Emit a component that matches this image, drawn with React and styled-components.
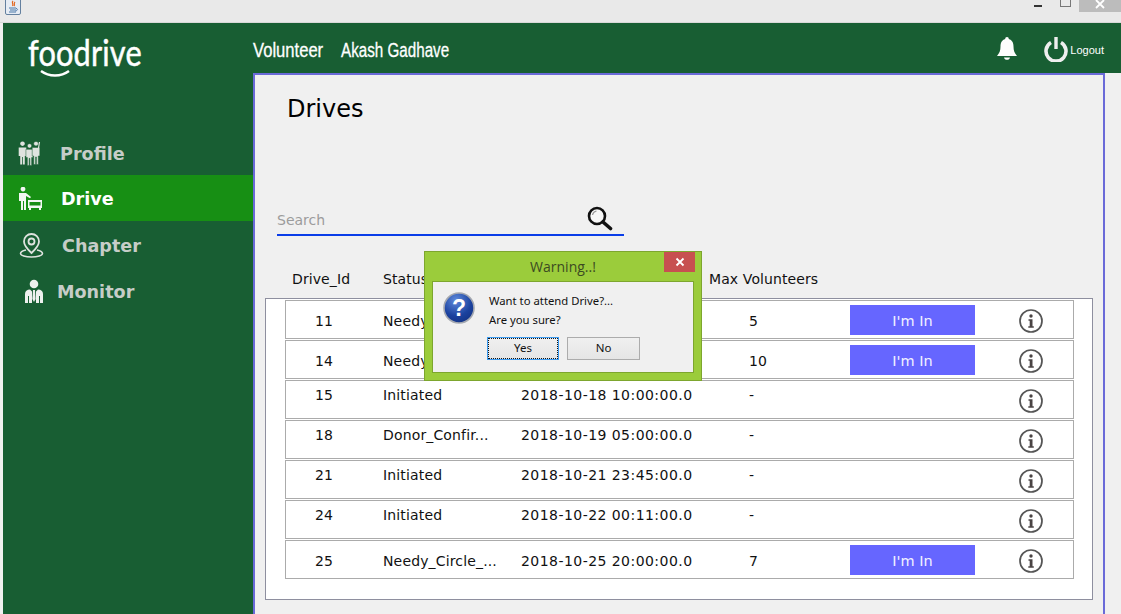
import React from 'react';
import styled, { createGlobalStyle } from 'styled-components';

const GlobalStyle = createGlobalStyle`
  html, body {
    margin: 0;
    padding: 0;
    height: 100%;
    overflow: hidden;
    background: #f0f0f0;
    font-family: "DejaVu Sans", sans-serif;
  }
`;

const green = '#185e33';

const Page = styled.div`
  position: relative;
  width: 1121px;
  height: 614px;
  overflow: hidden;
  display: flex;
  flex-direction: column;
  background: #f0f0f0;
`;

const TitleBar = styled.div`
  height: 23px;
  flex: none;
  display: flex;
  align-items: flex-start;
  padding-left: 5px;
  background: #e9e9e9;
  box-sizing: border-box;
  border-bottom: 1px solid #d8d8d8;
`;

const WindowControls = styled.div`
  margin-left: auto;
  display: flex;
  align-items: flex-start;
`;

const MinButton = styled.div`
  width: 8px;
  height: 2px;
  margin: 5px 18px 0 0;
  background: #333;
`;

const MaxButton = styled.div`
  width: 9px;
  height: 6px;
  margin-right: 8px;
  border: 1px solid #777;
  border-top: none;
`;

const CloseButton = styled.div`
  width: 42px;
  height: 12px;
  background: #bcbcbc;
  display: flex;
  justify-content: center;
`;

const Frame = styled.div`
  flex: 1;
  min-height: 0;
  display: flex;
  flex-direction: column;
  margin-left: 3px;
`;

const Header = styled.header`
  height: 50px;
  flex: none;
  display: flex;
  align-items: center;
  background: ${green};
  color: #fff;
`;

const Logo = styled.div`
  position: relative;
  z-index: 1;
  width: 250px;
  flex: none;
  box-sizing: border-box;
  padding: 11px 0 0 25px;
  align-self: flex-start;
  display: flex;
  flex-direction: column;
  height: 100%;
`;

const LogoText = styled.div`
  font-family: "Lato", sans-serif;
  font-size: 37px;
  line-height: 36px;
  letter-spacing: 0.2px;
  color: #fff;
  transform: scaleX(0.83);
  transform-origin: left center;
  -webkit-text-stroke: 0.5px #fff;
`;

const Smile = styled.svg`
  display: block;
  flex: none;
  margin: 0 0 0 12px;
`;

const UserLabel = styled.span`
  display: inline-block;
  width: ${p => p.$w}px;
  flex: none;
  font-family: "Liberation Sans", sans-serif;
  font-size: 20px;
  white-space: nowrap;
  margin-top: 5px;
  transform: scaleX(${p => p.$scale});
  transform-origin: left center;
  -webkit-text-stroke: 0.3px #fff;
`;

const HeaderRight = styled.div`
  margin-left: auto;
  display: flex;
  align-items: center;
  padding: 2px 17px 0 0;
`;

const LogoutLabel = styled.span`
  font-family: "Liberation Sans", sans-serif;
  font-size: 11px;
  margin: 2px 0 0 2px;
`;

const Body = styled.div`
  flex: 1;
  min-height: 0;
  display: flex;
`;

const Sidebar = styled.nav`
  width: 250px;
  flex: none;
  box-sizing: border-box;
  padding-top: 56px;
  background: ${green};
`;

const NavItem = styled.div`
  height: 46px;
  display: flex;
  align-items: center;
  box-sizing: border-box;
  padding-left: ${p => p.$indent}px;
  padding-top: ${p => (p.$active ? 1 : 3)}px;
  background: ${p => (p.$active ? '#178f14' : 'transparent')};
  color: ${p => (p.$active ? '#ffffff' : '#c6cdc8')};
  font-size: 17.6px;
  font-weight: bold;
`;

const NavIcon = styled.svg`
  flex: none;
  margin-right: ${p => p.$gap}px;
`;

const Main = styled.main`
  width: 852px;
  flex: none;
  box-sizing: border-box;
  border: 2px solid #6a6ad8;
  border-bottom: none;
  padding: 0 10px;
  background: #f0f0f0;
`;

const Title = styled.h1`
  margin: 19px 0 0 22px;
  font-size: 24px;
  line-height: 30px;
  font-weight: normal;
  color: #000;
`;

const SearchBar = styled.div`
  margin: 82px 0 0 12px;
  width: 347px;
  height: 30px;
  box-sizing: border-box;
  display: flex;
  align-items: center;
  border-bottom: 2px solid #0a3de8;
`;

const SearchInput = styled.input`
  flex: 1;
  min-width: 0;
  border: none;
  outline: none;
  background: transparent;
  padding: 0;
  font-family: "DejaVu Sans", sans-serif;
  font-size: 14px;
  &::placeholder {
    color: #9c9c9c;
    opacity: 1;
  }
`;

const SearchIcon = styled.svg`
  flex: none;
  margin: -2px 11px 0 0;
`;

const HeadRow = styled.div`
  display: flex;
  height: 20px;
  margin: 33px 0 0 27px;
  font-size: 14px;
  letter-spacing: 0.1px;
  line-height: 20px;
  color: #111;
`;

const HeadCell = styled.span`
  width: ${p => p.$w}px;
  flex: none;
`;

const TableBox = styled.div`
  margin-top: 9px;
  height: 302px;
  box-sizing: border-box;
  border: 1px solid #8e8f9f;
  background: #fff;
  padding: 1px 18px 0 19px;
`;

const Row = styled.div`
  height: 39px;
  margin-bottom: 1px;
  box-sizing: border-box;
  display: grid;
  grid-template-columns: 97px 138px 228px 101px 125px 1fr;
  align-items: center;
  border: 1px solid #ababab;
  font-size: 14px;
  color: #111;
`;

const Cell = styled.div`
  white-space: nowrap;
  overflow: hidden;
  padding-top: ${p => (p.$high ? 0 : 3)}px;
  padding-bottom: ${p => (p.$high ? 10 : 0)}px;
`;

const IdCell = styled(Cell)`
  text-align: center;
  padding-right: 21px;
`;

const StatusCell = styled(Cell)`
  letter-spacing: 0.15px;
`;

const DateCell = styled(Cell)`
  letter-spacing: 0.45px;
`;

const ImIn = styled.button`
  display: block;
  height: 30px;
  width: 125px;
  border: none;
  padding: 2px 0 0;
  background: #6666ff;
  color: #f2f2ff;
  font-family: "DejaVu Sans", sans-serif;
  font-size: 14.5px;
`;

const InfoCell = styled.div`
  display: flex;
  justify-content: center;
  padding-left: 13px;
  padding-top: 3px;
`;

const Dialog = styled.div`
  position: absolute;
  left: 424px;
  top: 251px;
  width: 278px;
  height: 130px;
  box-sizing: border-box;
  border: 1px solid #7da62e;
  background: #9bcc3b;
  padding: 0 7px 7px;
  display: flex;
  flex-direction: column;
`;

const DialogHead = styled.div`
  height: 29px;
  flex: none;
  display: flex;
  align-items: center;
  justify-content: center;
  font-family: "Open Sans", sans-serif;
  font-size: 14px;
  color: #3c4a22;
`;

const DialogClose = styled.div`
  position: absolute;
  top: 0;
  right: 6px;
  width: 31px;
  height: 20px;
  background: #c75050;
  display: flex;
  align-items: center;
  justify-content: center;
`;

const DialogBody = styled.div`
  flex: 1;
  background: #f0f0f0;
  border: 1px solid #7da62e;
  box-sizing: border-box;
  padding: 10px 0 0 10px;
  display: flex;
  flex-direction: column;
`;

const Message = styled.div`
  display: flex;
`;

const MessageText = styled.div`
  margin: -1px 0 0 14px;
  font-family: "Noto Sans", sans-serif;
  font-size: 11.3px;
  line-height: 19px;
  color: #111;
`;

const DialogButtons = styled.div`
  display: flex;
  gap: 8px;
  margin: 8px 0 0 44px;
`;

const DialogButton = styled.button`
  width: ${p => p.$w}px;
  height: 23px;
  box-sizing: border-box;
  padding: 0 0 2px;
  font-family: "Noto Sans", sans-serif;
  font-size: 11.5px;
  color: #111;
  background: linear-gradient(#f0f0f0, #e5e5e5);
  border: 1px solid ${p => (p.$focus ? '#3c9bf0' : '#acacac')};
  outline: ${p => (p.$focus ? '1px dotted #111' : 'none')};
  outline-offset: -2px;
`;

const JavaIcon = () => (
  <svg width="16" height="15" viewBox="0 0 16 15">
    <rect x="0.5" y="-2" width="15" height="16.5" rx="1.5" fill="#e6ecf4" stroke="#64809f" />
    <path d="M8 1c-2 2 1 3-.5 5M10 2c-2 2 .5 2.500-1 4" fill="none" stroke="#e2661e" strokeWidth="1.200" />
    <path d="M4 8h7M5 10h6M4 12h7" stroke="#4b78a8" strokeWidth="1" />
    <path d="M11 8.500c2 0 2 2-.5 2.500" fill="none" stroke="#4b78a8" />
  </svg>
);

const BellIcon = () => (
  <svg width="22" height="26" viewBox="0 0 22 26" style={{ marginRight: 26 }}>
    <path d="M11 1c1.200 0 1.800.8 1.800 2 3.400 1 4.700 4 4.700 7.500 0 4 1 6.500 3.500 9.500H1c2.500-3 3.500-5.500 3.500-9.500C4.500 7 5.800 4 9.200 3 9.200 1.800 9.800 1 11 1z" fill="#fdfdfd" />
    <path d="M8 21.500h6c-.3 1.500-1.500 2.300-3 2.300s-2.700-.8-3-2.300z" fill="#fdfdfd" />
  </svg>
);

const PowerIcon = () => (
  <svg width="24" height="26" viewBox="0 0 24 26">
    <path d="M7 6.500a10 10 0 1 0 10 0" fill="none" stroke="#efefef" strokeWidth="3.600" />
    <path d="M12 1v12" stroke="#efefef" strokeWidth="3.400" />
  </svg>
);

const person = (x, y, s = 1) =>
  `M${x} ${y}a${2.4 * s} ${2.4 * s} 0 1 1 .01 0zM${x - 4 * s} ${y + 1.5 * s}h${8 * s}v${9 * s}h-${1.6 * s}v${9 * s}h-${2 * s}v-${8 * s}h-${.8 * s}v${8 * s}h-${2 * s}v-${9 * s}h-${1.6 * s}z`;

const ProfileIcon = ({ color }) => (
  <NavIcon $gap={19} width="23" height="25" viewBox="0 0 23 25">
    <path d={person(4.5, 5, 0.95)} fill={color} />
    <path d={person(11.5, 7, 0.9)} fill={color} stroke={green} strokeWidth="0.5" />
    <path d={person(18, 5, 0.95)} fill={color} stroke={green} strokeWidth="0.5" />
    <path d="M20.500 7l1-6" stroke={color} strokeWidth="1.200" />
  </NavIcon>
);

const DriveIcon = ({ color }) => (
  <NavIcon $gap={18} width="25" height="24" viewBox="0 0 25 24">
    <path d="M5 4.500a2.400 2.400 0 1 1 .01 0zM1 6h7l5 4-1 1.200L8 9v14H6v-9H5v9H3v-9H1z" fill={color} />
    <path d="M10 13h14v8h-14zM11.500 15v3.500h11V15z" fill={color} fillRule="evenodd" />
    <path d="M11 21h2v2h-2zM21 21h2v2h-2z" fill={color} />
  </NavIcon>
);

const ChapterIcon = ({ color }) => (
  <NavIcon $gap={18} width="25" height="25" viewBox="0 0 25 25">
    <path d="M12.500 1a7.500 7.500 0 0 0-7.500 7.500c0 4.500 7.500 11.500 7.500 11.500s7.500-7 7.500-11.500A7.500 7.500 0 0 0 12.500 1z" fill="none" stroke={color} strokeWidth="1.800" />
    <circle cx="12.500" cy="8.500" r="3" fill="none" stroke={color} strokeWidth="1.800" />
    <path d="M7 17c-3 .7-5.500 2-5.500 3.500 0 2 5 3.500 11 3.500s11-1.500 11-3.500c0-1.500-2.500-2.800-5.500-3.500" fill="none" stroke={color} strokeWidth="1.600" />
  </NavIcon>
);

const MonitorIcon = ({ color }) => (
  <NavIcon $gap={13} width="20" height="25" viewBox="0 0 20 25">
    <circle cx="10" cy="5" r="4.300" fill={color} />
    <path d="M1 24v-9c0-3 2-4.500 5-4.500l2 2v11.500H5v-7H4v7zM19 24v-9c0-3-2-4.500-5-4.500l-2 2v11.500h3v-7h1v7z" fill={color} />
    <path d="M9 11h2l.6 9-1.600 3-1.600-3z" fill={color} />
  </NavIcon>
);

const MagnifierIcon = () => (
  <SearchIcon width="26" height="26" viewBox="0 0 26 26">
    <circle cx="10" cy="10" r="8" fill="#f7f7f7" stroke="#111" strokeWidth="2.600" />
    <path d="M5.500 9a5 5 0 0 1 4-4" fill="none" stroke="#999" strokeWidth="1.200" />
    <path d="M16 16l7.500 6.500" stroke="#111" strokeWidth="3.600" strokeLinecap="round" />
  </SearchIcon>
);

const InfoIcon = () => (
  <svg width="24" height="24" viewBox="0 0 24 24">
    <circle cx="12" cy="12" r="11" fill="#fff" stroke="#555" strokeWidth="1.700" />
    <circle cx="12" cy="7" r="1.700" fill="#4a4444" />
    <path d="M9.500 10.200h4v7h1.300v1.500H9.300v-1.500h1.400v-5.500H9.500z" fill="#4a4444" />
  </svg>
);

const QuestionIcon = () => (
  <svg width="32" height="32" viewBox="0 0 32 32" style={{ flex: 'none' }}>
    <defs>
      <radialGradient id="q" cx="0.4" cy="0.25" r="0.85">
        <stop offset="0" stopColor="#5f8bdc" />
        <stop offset="0.6" stopColor="#1b429f" />
        <stop offset="1" stopColor="#12307f" />
      </radialGradient>
    </defs>
    <circle cx="16" cy="16" r="15" fill="url(#q)" stroke="#a4a8b0" strokeWidth="1.600" />
    <text x="16" y="24" textAnchor="middle" fontFamily="Liberation Sans" fontWeight="bold" fontSize="23" fill="#fff">?</text>
  </svg>
);

const drives = [
  { id: 11, status: 'Needy_Circle_...', date: '2018-10-15 10:00:00.0', max: '5', open: true },
  { id: 14, status: 'Needy_Circle_...', date: '2018-10-17 10:00:00.0', max: '10', open: true },
  { id: 15, status: 'Initiated', date: '2018-10-18 10:00:00.0', max: '-' },
  { id: 18, status: 'Donor_Confir...', date: '2018-10-19 05:00:00.0', max: '-' },
  { id: 21, status: 'Initiated', date: '2018-10-21 23:45:00.0', max: '-' },
  { id: 24, status: 'Initiated', date: '2018-10-22 00:11:00.0', max: '-' },
  { id: 25, status: 'Needy_Circle_...', date: '2018-10-25 20:00:00.0', max: '7', open: true },
];

const App = () => (
  <Page>
    <GlobalStyle />
    <TitleBar>
      <JavaIcon />
      <WindowControls>
        <MinButton />
        <MaxButton />
        <CloseButton>
          <svg width="10" height="10" viewBox="0 0 10 10">
            <path d="M1 0l8 8M9 0L1 8" stroke="#fff" strokeWidth="1.800" />
          </svg>
        </CloseButton>
      </WindowControls>
    </TitleBar>
    <Frame>
      <Header>
        <Logo>
          <LogoText>foodrive</LogoText>
          <Smile width="30" height="8" viewBox="0 0 30 8">
            <path d="M1 1c8 6 20 6 28 0" fill="none" stroke="#fff" strokeWidth="2.400" />
          </Smile>
        </Logo>
        <UserLabel $w={88} $scale={0.83}>Volunteer</UserLabel>
        <UserLabel $w={110} $scale={0.76}>Akash Gadhave</UserLabel>
        <HeaderRight>
          <BellIcon />
          <PowerIcon />
          <LogoutLabel>Logout</LogoutLabel>
        </HeaderRight>
      </Header>
      <Body>
        <Sidebar>
          <NavItem $indent={15}>
            <ProfileIcon color="#dfe3df" />
            <span>Profile</span>
          </NavItem>
          <NavItem $indent={15} $active>
            <DriveIcon color="#f2f7f2" />
            <span>Drive</span>
          </NavItem>
          <NavItem $indent={16}>
            <ChapterIcon color="#dfe3df" />
            <span>Chapter</span>
          </NavItem>
          <NavItem $indent={21}>
            <MonitorIcon color="#eef0ee" />
            <span>Monitor</span>
          </NavItem>
        </Sidebar>
        <Main>
          <Title>Drives</Title>
          <SearchBar>
            <SearchInput placeholder="Search" />
            <MagnifierIcon />
          </SearchBar>
          <HeadRow>
            <HeadCell $w={91}>Drive_Id</HeadCell>
            <HeadCell $w={326}>Status</HeadCell>
            <HeadCell $w={130}>Max Volunteers</HeadCell>
          </HeadRow>
          <TableBox>
            {drives.map(d => (
              <Row key={d.id}>
                <IdCell $high={!d.open}>{d.id}</IdCell>
                <StatusCell $high={!d.open}>{d.status}</StatusCell>
                <DateCell $high={!d.open}>{d.date}</DateCell>
                <Cell $high={!d.open}>{d.max}</Cell>
                <div>{d.open && <ImIn>I'm In</ImIn>}</div>
                <InfoCell><InfoIcon /></InfoCell>
              </Row>
            ))}
          </TableBox>
        </Main>
      </Body>
    </Frame>
    <Dialog>
      <DialogHead>Warning..!</DialogHead>
      <DialogClose>
        <svg width="10" height="10" viewBox="0 0 10 10">
          <path d="M1.500 1.500l7 7M8.500 1.500l-7 7" stroke="#fff" strokeWidth="1.800" />
        </svg>
      </DialogClose>
      <DialogBody>
        <Message>
          <QuestionIcon />
          <MessageText>
            <div>Want to attend Drive?...</div>
            <div>Are you sure?</div>
          </MessageText>
        </Message>
        <DialogButtons>
          <DialogButton $w={72} $focus>Yes</DialogButton>
          <DialogButton $w={73}>No</DialogButton>
        </DialogButtons>
      </DialogBody>
    </Dialog>
  </Page>
);

export default App;
